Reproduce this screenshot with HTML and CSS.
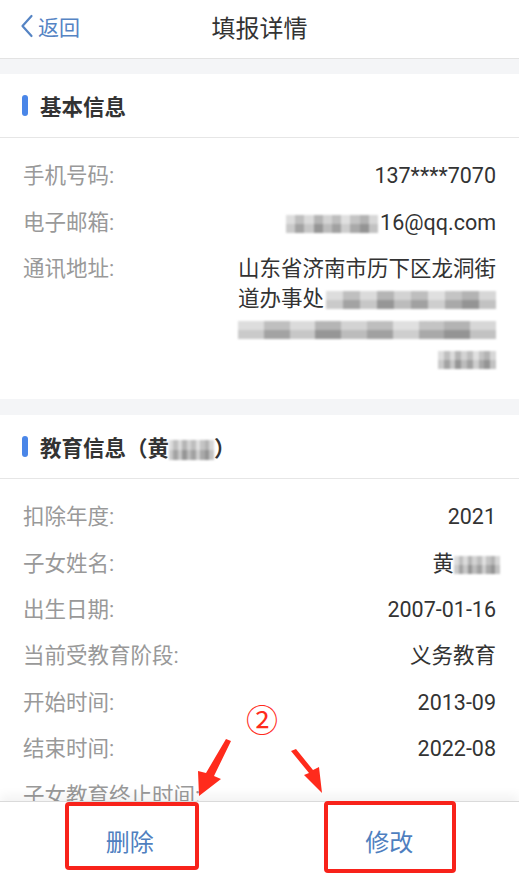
FILE: index.html
```html
<!DOCTYPE html>
<html lang="zh-CN">
<head>
<meta charset="utf-8">
<title>填报详情</title>
<link rel="stylesheet" href="styles.css">
</head>
<body>
<div class="app">
  <header class="nav">
    <a class="back" href="#">
      <svg class="chev" width="14" height="24" viewBox="0 0 14 24"><polyline points="11.5,2 2.5,12 11.5,22" fill="none" stroke="#5584c4" stroke-width="2.2" stroke-linecap="round" stroke-linejoin="round"/></svg>
      <span>返回</span>
    </a>
    <h1 class="title">填报详情</h1>
    <span class="nav-spacer"></span>
  </header>

  <main class="content">
    <section class="card">
      <div class="card-head"><span class="bar"></span><span>基本信息</span></div>
      <div class="card-body">
        <div class="row"><span class="label">手机号码:</span><span class="value">137****7070</span></div>
        <div class="row"><span class="label">电子邮箱:</span><span class="value"><i class="mosaic m-email"></i>16@qq.com</span></div>
        <div class="row"><span class="label">通讯地址:</span>
          <span class="value addr">
            <span class="line">山东省济南市历下区龙洞街</span>
            <span class="line">道办事处<i class="mosaic m-addr2"></i></span>
            <span class="line"><i class="mosaic m-addr3"></i></span>
            <span class="line"><i class="mosaic m-addr4"></i></span>
          </span>
        </div>
      </div>
    </section>

    <section class="card">
      <div class="card-head"><span class="bar"></span><span>教育信息（黄<i class="mosaic m-head"></i>）</span></div>
      <div class="card-body">
        <div class="row"><span class="label">扣除年度:</span><span class="value">2021</span></div>
        <div class="row"><span class="label">子女姓名:</span><span class="value">黄<i class="mosaic m-name"></i></span></div>
        <div class="row"><span class="label">出生日期:</span><span class="value">2007-01-16</span></div>
        <div class="row"><span class="label">当前受教育阶段:</span><span class="value">义务教育</span></div>
        <div class="row"><span class="label">开始时间:</span><span class="value">2013-09</span></div>
        <div class="row"><span class="label">结束时间:</span><span class="value">2022-08</span></div>
        <div class="row"><span class="label">子女教育终止时间:</span><span class="value"></span></div>
      </div>
    </section>
  </main>

  <footer class="actions">
    <button class="act">删除</button>
    <button class="act">修改</button>
  </footer>

  <div class="annot">
    <span class="step">②</span>
    <svg class="arrows" width="519" height="884" viewBox="0 0 519 884">
      <polygon points="231,741 214,776 221,779 199,796 198,771 206,773 226,739" fill="#ff2b1c"/>
      <polygon points="296,749 313,770 319,767 322,793 304,775 309,773 291,751" fill="#ff2b1c"/>
    </svg>
    <span class="box box-del"></span>
    <span class="box box-edit"></span>
  </div>
</div>
</body>
</html>
```
FILE: styles.css
```css
* { box-sizing: border-box; }
html, body {
  margin: 0;
  padding: 0;
  width: 519px;
  height: 884px;
  overflow: hidden;
  background: #fff;
  font-family: Roboto, "Noto Sans CJK SC", sans-serif;
}
.app {
  position: relative;
  width: 519px;
  height: 884px;
  display: flex;
  flex-direction: column;
}
.nav {
  flex: none;
  height: 59px;
  border-bottom: 1px solid #e3e3e3;
  display: grid;
  grid-template-columns: 1fr auto 1fr;
  align-items: center;
  padding: 0 0 6px 0;
}
.back {
  display: flex;
  align-items: center;
  gap: 4px;
  padding-left: 20px;
  color: #5584c4;
  text-decoration: none;
  font-size: 21px;
}
.title {
  margin: 0;
  font-size: 24px;
  font-weight: 400;
  color: #333;
}
.content {
  flex: 1;
  overflow: hidden;
  background: #f4f5f7;
  padding-top: 15px;
}
.card { background: #fff; }
.card + .card { margin-top: 16px; }
.card-head {
  height: 64px;
  border-bottom: 1px solid #e6e6e6;
  display: flex;
  align-items: center;
  padding: 0 0 0 22px;
  font-size: 21.5px;
  font-weight: 700;
  color: #333;
}
.bar {
  width: 6px;
  height: 21px;
  border-radius: 3px;
  background: #4a86e8;
  margin-right: 12px;
}
.card-body { padding: 15px 23px 17px; }
.row {
  display: flex;
  justify-content: space-between;
  padding: 8.2px 0;
  line-height: 30px;
  font-size: 21.5px;
}
.label { color: #999; flex: none; }
.value { color: #333; text-align: right; }
.addr { width: 260px; display: flex; flex-direction: column; align-items: flex-end; }
.line { display: block; height: 30px; white-space: nowrap; }
.mosaic {
  display: inline-block;
  vertical-align: middle;
  height: 18px;
  filter: blur(1.2px);
  background:
    linear-gradient(180deg, rgba(255,255,255,0.25) 0 50%, rgba(0,0,0,0.04) 50% 100%),
    linear-gradient(90deg, #d2d2d2 0 10%, #aaa 10% 20%, #cfcfcf 20% 30%, #9c9c9c 30% 40%, #c4c4c4 40% 50%, #a8a8a8 50% 60%, #d6d6d6 60% 70%, #b0b0b0 70% 80%, #9a9a9a 80% 90%, #cacaca 90% 100%);
}
.m-email { width: 92px; margin-right: 2px; }
.m-addr2 { width: 170px; margin-left: 2px; }
.m-addr3 { width: 258px; }
.m-addr4 { width: 58px; }
.m-head { width: 45px; height: 20px; }
.m-name { width: 46px; margin-right: -4px; }
.actions {
  flex: none;
  height: 83px;
  border-top: 1px solid #dadada;
  box-shadow: 0 -6px 10px rgba(0,0,0,0.05);
  background: #fff;
  display: flex;
  position: relative;
}
.act {
  flex: 1;
  border: 0;
  background: none;
  font-family: inherit;
  font-size: 24px;
  color: #4f7fbf;
  padding: 0 0 6px;
}
.annot { position: absolute; inset: 0; pointer-events: none; }
.arrows { position: absolute; left: 0; top: 0; }
.step {
  position: absolute;
  left: 246px;
  top: 700px;
  font-family: "Noto Sans CJK SC", sans-serif;
  font-size: 32px;
  line-height: 36px;
  color: #ff2b1c;
}
.box {
  position: absolute;
  border: 4px solid #f8221a;
  border-radius: 4px;
}
.box-del { left: 65px; top: 802px; width: 134px; height: 68px; }
.box-edit { left: 324px; top: 801px; width: 132px; height: 72px; }
```
